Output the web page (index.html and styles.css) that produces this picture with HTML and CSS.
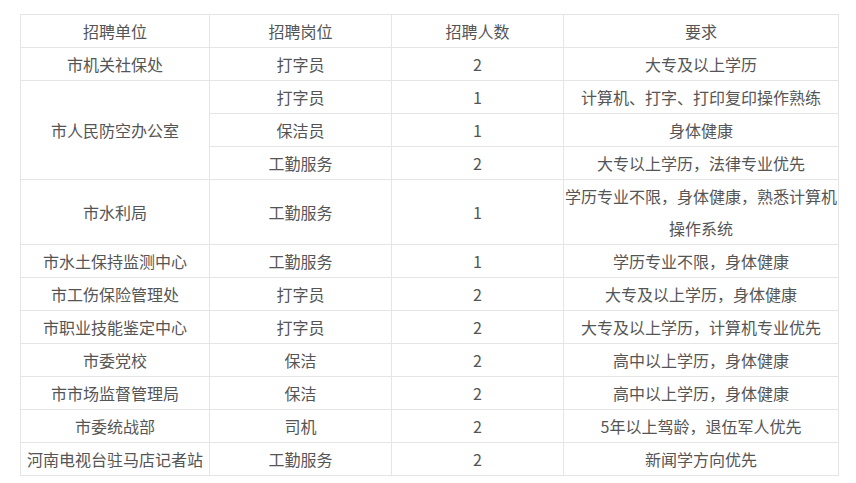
FILE: index.html
```html
<!DOCTYPE html>
<html lang="zh">
<head>
<meta charset="utf-8">
<link rel="stylesheet" href="styles.css">
</head>
<body>
<table class="jobs">
  <colgroup>
    <col class="c1"><col class="c2"><col class="c3"><col class="c4">
  </colgroup>
  <tbody>
    <tr><td>招聘单位</td><td>招聘岗位</td><td>招聘人数</td><td>要求</td></tr>
    <tr><td>市机关社保处</td><td>打字员</td><td>2</td><td>大专及以上学历</td></tr>
    <tr><td rowspan="3">市人民防空办公室</td><td>打字员</td><td>1</td><td>计算机、打字、打印复印操作熟练</td></tr>
    <tr><td>保洁员</td><td>1</td><td>身体健康</td></tr>
    <tr><td>工勤服务</td><td>2</td><td>大专以上学历，法律专业优先</td></tr>
    <tr><td>市水利局</td><td>工勤服务</td><td>1</td><td>学历专业不限，身体健康，熟悉计算机操作系统</td></tr>
    <tr><td>市水土保持监测中心</td><td>工勤服务</td><td>1</td><td>学历专业不限，身体健康</td></tr>
    <tr><td>市工伤保险管理处</td><td>打字员</td><td>2</td><td>大专及以上学历，身体健康</td></tr>
    <tr><td>市职业技能鉴定中心</td><td>打字员</td><td>2</td><td>大专及以上学历，计算机专业优先</td></tr>
    <tr><td>市委党校</td><td>保洁</td><td>2</td><td>高中以上学历，身体健康</td></tr>
    <tr><td>市市场监督管理局</td><td>保洁</td><td>2</td><td>高中以上学历，身体健康</td></tr>
    <tr><td>市委统战部</td><td>司机</td><td>2</td><td>5年以上驾龄，退伍军人优先</td></tr>
    <tr><td>河南电视台驻马店记者站</td><td>工勤服务</td><td>2</td><td>新闻学方向优先</td></tr>
  </tbody>
</table>
</body>
</html>
```
FILE: styles.css
```css
html, body {
  margin: 0;
  padding: 0;
  background: #ffffff;
}
body {
  padding: 14px 0 0 20px;
  font-family: "Noto Sans CJK SC", "Microsoft YaHei", sans-serif;
  color: #555555;
}
.jobs {
  border-collapse: collapse;
  table-layout: fixed;
  width: 818px;
}
.c1 { width: 189px; }
.c2 { width: 182px; }
.c3 { width: 172px; }
.c4 { width: 275px; }
.jobs td {
  border: 1px solid #e5e5e5;
  padding: 0;
  font-size: 16px;
  line-height: 32px;
  height: 32px;
  text-align: center;
  vertical-align: middle;
  word-break: break-all;
}
```
